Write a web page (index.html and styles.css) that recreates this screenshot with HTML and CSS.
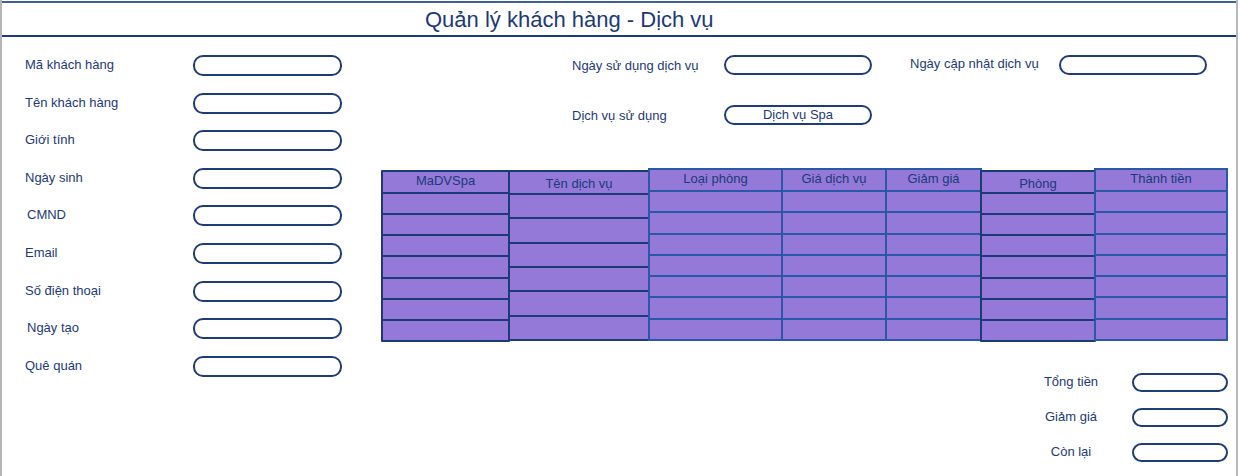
FILE: index.html
```html
<!DOCTYPE html>
<html lang="vi">
<head>
<meta charset="utf-8">
<title>Quản lý khách hàng - Dịch vụ</title>
<link rel="stylesheet" href="styles.css">
</head>
<body>
<div class="frame">
  <header class="header"><h1 class="title">Quản lý khách hàng - Dịch vụ</h1></header>
  <main class="content">
    <section class="customer">
      <div class="row"><span class="label">Mã khách hàng</span><span class="input"></span></div>
      <div class="row"><span class="label">Tên khách hàng</span><span class="input"></span></div>
      <div class="row"><span class="label">Giới tính</span><span class="input"></span></div>
      <div class="row"><span class="label">Ngày sinh</span><span class="input"></span></div>
      <div class="row"><span class="label indent">CMND</span><span class="input"></span></div>
      <div class="row"><span class="label">Email</span><span class="input"></span></div>
      <div class="row"><span class="label">Số điện thoại</span><span class="input"></span></div>
      <div class="row"><span class="label indent">Ngày tạo</span><span class="input"></span></div>
      <div class="row"><span class="label">Quê quán</span><span class="input"></span></div>
    </section>
    <section class="service">
      <div class="service-form">
        <span class="label">Ngày sử dụng dịch vụ</span><span class="input"></span>
        <span class="label second up">Ngày cập nhật dịch vụ</span><span class="input"></span>
        <span class="label">Dịch vụ sử dụng</span><span class="input filled">Dịch vụ Spa</span>
      </div>
      <div class="table">
        <div class="col sketch w-ma"><div class="th th-20">MaDVSpa</div><div class="td"></div><div class="td"></div><div class="td"></div><div class="td"></div><div class="td"></div><div class="td"></div><div class="td"></div></div>
        <div class="col sketch w-ten tall"><div class="th th-21 low">Tên dịch vụ</div><div class="td"></div><div class="td"></div><div class="td"></div><div class="td"></div><div class="td"></div><div class="td"></div></div>
        <div class="col straight w-loai"><div class="th th-20">Loại phòng</div><div class="td"></div><div class="td"></div><div class="td"></div><div class="td"></div><div class="td"></div><div class="td"></div><div class="td"></div></div>
        <div class="col straight w-gia"><div class="th th-20">Giá dịch vụ</div><div class="td"></div><div class="td"></div><div class="td"></div><div class="td"></div><div class="td"></div><div class="td"></div><div class="td"></div></div>
        <div class="col straight w-giam"><div class="th th-20">Giảm giá</div><div class="td"></div><div class="td"></div><div class="td"></div><div class="td"></div><div class="td"></div><div class="td"></div><div class="td"></div></div>
        <div class="col sketch w-phong"><div class="th th-20 low">Phòng</div><div class="td"></div><div class="td"></div><div class="td"></div><div class="td"></div><div class="td"></div><div class="td"></div><div class="td"></div></div>
        <div class="col straight w-thanh"><div class="th th-20">Thành tiền</div><div class="td"></div><div class="td"></div><div class="td"></div><div class="td"></div><div class="td"></div><div class="td"></div><div class="td"></div></div>
      </div>
      <div class="totals">
        <span class="tlabel">Tổng tiền</span><span class="input"></span>
        <span class="tlabel">Giảm giá</span><span class="input"></span>
        <span class="tlabel">Còn lại</span><span class="input"></span>
      </div>
    </section>
  </main>
</div>
</body>
</html>
```

FILE: styles.css
```css
html, body {
  margin: 0;
  padding: 0;
  background: #ffffff;
}

body {
  font-family: "Liberation Sans", Arial, sans-serif;
  color: #1b3a7a;
  font-size: 13px;
}

.frame {
  width: 1234px;
  height: 476px;
  border-left: 2px solid #b5b5b5;
  border-right: 2px solid #b5b8c4;
  overflow: hidden;
}

.header {
  margin-top: 1px;
  height: 32px;
  border-top: 2px solid #3f5f98;
  border-bottom: 2px solid #1d3b7c;
  display: flex;
  align-items: center;
  padding-left: 423px;
}

.title {
  margin: 0;
  font-weight: normal;
  font-size: 22px;
  line-height: 26px;
  color: #1b3a7a;
  padding-top: 1px;
}

.content {
  display: flex;
  align-items: flex-start;
}

.customer {
  width: 317px;
  padding-left: 23px;
  padding-top: 18px;
  display: flex;
  flex-direction: column;
  gap: 16.6px;
}

.row {
  display: flex;
  align-items: center;
  height: 21px;
}

.row .label {
  width: 168px;
  flex: 0 0 168px;
  margin-top: -2px;
}

.label.indent {
  padding-left: 2px;
  width: 166px;
  flex-basis: 166px;
}

.label {
  line-height: 15px;
  white-space: nowrap;
}

.input {
  box-sizing: border-box;
  display: flex;
  align-items: center;
  justify-content: center;
  width: 149px;
  height: 21px;
  border: 2px solid #1e3c7c;
  border-radius: 10px;
  background: #ffffff;
  font-size: 13px;
  line-height: 15px;
}

.service {
  flex: 1;
  display: flex;
  flex-direction: column;
}

.service-form {
  margin-left: 230px;
  padding-top: 18px;
  display: grid;
  grid-template-columns: 152px 148px 187px 148px;
  grid-auto-rows: 20px;
  row-gap: 30px;
  align-items: center;
}

.service-form .input {
  height: 20px;
  width: 148px;
}

.label.second {
  padding-left: 38px;
}

.label.up {
  position: relative;
  top: -2px;
}

.input.filled {
  padding-bottom: 1px;
}

.table {
  margin-top: 43px;
  margin-left: 39px;
  display: flex;
  align-items: flex-start;
}

.col {
  box-sizing: border-box;
  display: flex;
  flex-direction: column;
  background: #9479d9;
}

.col + .col {
  margin-left: -2px;
}

.col.sketch {
  margin-top: 2px;
  height: 172px;
  border: 2px solid #1d3a78;
  border-radius: 1px;
}

.col.sketch.tall {
  height: 171px;
}

.col.straight {
  height: 173px;
  border: 2px solid #2a58a6;
}

.th {
  flex: 0 0 auto;
  text-align: center;
  font-size: 13px;
  line-height: 15px;
  color: #1b3a7a;
  box-sizing: border-box;
  padding-top: 1px;
}

.th-20 { height: 20px; }
.th-21 { height: 21px; }
.th.low { padding-top: 4px; }

.td {
  flex: 1;
}

.sketch .td { border-top: 2px solid #1d3a78; }
.straight .td { border-top: 2px solid #2a58a6; }

.w-ma { width: 129px; }
.w-ten { width: 142px; }
.w-loai { width: 135px; }
.w-gia { width: 106px; }
.w-giam { width: 97px; }
.w-phong { width: 116px; }
.w-thanh { width: 134px; }

.totals {
  align-self: flex-end;
  margin-right: 8px;
  margin-top: 31px;
  display: grid;
  grid-template-columns: 90px 96px;
  column-gap: 16px;
  grid-auto-rows: 19px;
  row-gap: 16px;
  align-items: center;
}

.totals .input {
  width: 96px;
  height: 19px;
}

.tlabel {
  text-align: center;
  line-height: 15px;
  white-space: nowrap;
  margin-top: -2px;
}
```
